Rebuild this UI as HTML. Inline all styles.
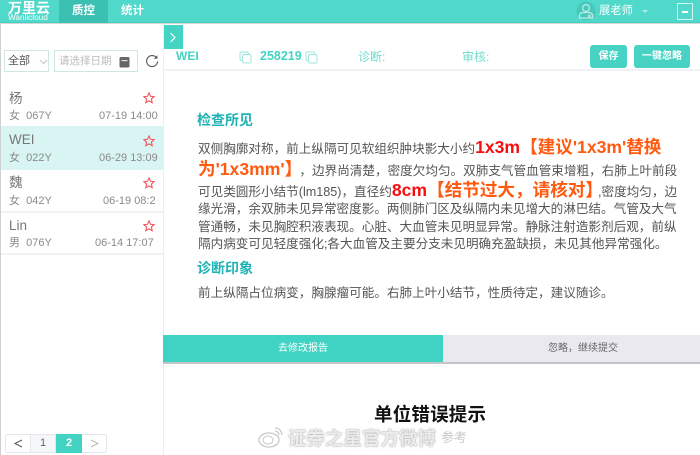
<!DOCTYPE html>
<html><head><meta charset="utf-8">
<style>
*{box-sizing:border-box;margin:0;padding:0}
html,body{width:700px;height:455px;overflow:hidden;background:#fff}
body{position:relative;font-family:"Liberation Sans","Noto Sans CJK SC",sans-serif;color:#555}
.a{position:absolute;white-space:nowrap}
.l{position:absolute;left:198px;white-space:nowrap;font-size:12.6px;line-height:18px;height:18px;color:#555}
.r{color:#f5100f;font-weight:700;font-size:17.6px}
.o{color:#ff5a10;font-weight:700;font-size:17.6px}
.h{position:absolute;left:197px;font-size:14px;font-weight:700;color:#1fb3b5;line-height:18px;white-space:nowrap}
.n{position:absolute;left:9px;font-size:13.5px;color:#777;line-height:18px}
.s{position:absolute;left:9px;font-size:11px;color:#8a8a8a;line-height:14px;white-space:pre}
.t{position:absolute;font-size:11px;color:#8a8a8a;line-height:14px;white-space:nowrap}
.star{position:absolute;left:143px}
.sep{position:absolute;left:1px;width:162px;height:2px;background:#f1f2f5}
</style></head><body>
<div class="a" style="left:0;top:0;width:700px;height:23px;background:#50d8ca;border-bottom:1px solid #45cfc0"></div>
<div class="a" style="left:0;top:23px;width:700px;height:1px;background:#d5d5d5"></div>
<div class="a" style="left:59px;top:0;width:49px;height:23px;background:#3cc0b2"></div>
<div class="a" style="left:8px;top:1px;font-size:14px;font-weight:700;color:#fff;line-height:14px">万里云</div>
<div class="a" style="left:8px;top:14px;font-size:8.2px;color:#fff;line-height:8px">Wanlicloud</div>
<div class="a" style="left:72px;top:3px;font-size:11.5px;font-weight:700;color:#fff;line-height:17px">质控</div>
<div class="a" style="left:121px;top:3px;font-size:11.5px;font-weight:700;color:#fff;line-height:17px">统计</div>
<svg class="a" style="left:576px;top:1px" width="20" height="20" viewBox="0 0 20 20"><circle cx="10" cy="10" r="9.5" fill="#47c9bc"/><circle cx="10" cy="7" r="3.4" fill="none" stroke="#bdeee8" stroke-width="1.2"/><path d="M3.5 17v-2.5q0-2.5 3-3h7q3 .5 3 3V17z" fill="none" stroke="#bdeee8" stroke-width="1.2"/><circle cx="13.5" cy="15" r="1" fill="none" stroke="#bdeee8"/></svg>
<div class="a" style="left:599px;top:3px;font-size:11.3px;color:#fff;line-height:17px">展老师</div>
<div class="a" style="left:642px;top:10px;width:0;height:0;border-left:3px solid transparent;border-right:3px solid transparent;border-top:3px solid #b5ebe5"></div>
<div class="a" style="left:677px;top:3px;width:16px;height:17px;border:1px solid #d5f5f1"></div>
<div class="a" style="left:682px;top:11px;width:6px;height:1.5px;background:#fff"></div>

<!-- left panel -->
<div class="a" style="left:0;top:24px;width:1px;height:431px;background:#cfcfcf"></div>
<div class="a" style="left:163px;top:24px;width:1px;height:431px;background:#eeeef1"></div>
<div class="a" style="left:4px;top:50px;width:45px;height:22px;border:1px solid #cfe7e2"></div>
<div class="a" style="left:8px;top:54px;font-size:11px;color:#555;line-height:15px">全部</div>
<svg class="a" style="left:39px;top:59px" width="9" height="6"><path d="M.8 1l3.7 3.5L8.2 1" fill="none" stroke="#c5c5c5"/></svg>
<div class="a" style="left:54px;top:50px;width:84px;height:22px;border:1px solid #cfe7e2"></div>
<div class="a" style="left:59px;top:54px;font-size:10.5px;color:#bbb;line-height:15px">请选择日期</div>
<svg class="a" style="left:119px;top:56px" width="11" height="12"><rect x=".5" y="1" width="10" height="10.5" rx="1.5" fill="#666"/><rect x="2.5" y="4" width="6" height="1.2" fill="#ddd"/></svg>
<svg class="a" style="left:145px;top:54px" width="14" height="14" viewBox="0 0 14 14"><path d="M11.8 4.2A5.5 5.5 0 1 0 12.6 7.5" fill="none" stroke="#555" stroke-width="1.1"/><path d="M12.4 1.2v3.6H8.9z" fill="#555"/></svg>

<div class="n" style="top:90px">杨</div>
<svg class="star" style="top:92px" width="12" height="12" viewBox="0 0 12 12"><path d="M6 1l1.5 3.3 3.6.4-2.7 2.4.8 3.6L6 8.9l-3.2 1.8.8-3.6L.9 4.7l3.6-.4z" fill="none" stroke="#f3545c" stroke-width="1.1"/></svg>
<div class="s" style="top:109px">女  067Y</div><div class="t" style="left:99px;top:109px">07-19 14:00</div>
<div class="a" style="left:1px;top:126px;width:162px;height:44px;background:#d9f5f3"></div>
<div class="n" style="top:131px">WEI</div>
<svg class="star" style="top:135px" width="12" height="12" viewBox="0 0 12 12"><path d="M6 1l1.5 3.3 3.6.4-2.7 2.4.8 3.6L6 8.9l-3.2 1.8.8-3.6L.9 4.7l3.6-.4z" fill="none" stroke="#f3545c" stroke-width="1.1"/></svg>
<div class="s" style="top:151px">女  022Y</div><div class="t" style="left:99px;top:151px">06-29 13:09</div>
<div class="n" style="top:174px">魏</div>
<svg class="star" style="top:177px" width="12" height="12" viewBox="0 0 12 12"><path d="M6 1l1.5 3.3 3.6.4-2.7 2.4.8 3.6L6 8.9l-3.2 1.8.8-3.6L.9 4.7l3.6-.4z" fill="none" stroke="#f3545c" stroke-width="1.1"/></svg>
<div class="s" style="top:194px">女  042Y</div><div class="t" style="left:103px;top:194px;width:52px;overflow:hidden">06-19 08:20</div>
<div class="sep" style="top:211px"></div>
<div class="n" style="top:217px">Lin</div>
<svg class="star" style="top:220px" width="12" height="12" viewBox="0 0 12 12"><path d="M6 1l1.5 3.3 3.6.4-2.7 2.4.8 3.6L6 8.9l-3.2 1.8.8-3.6L.9 4.7l3.6-.4z" fill="none" stroke="#f3545c" stroke-width="1.1"/></svg>
<div class="s" style="top:236px">男  076Y</div><div class="t" style="left:95px;top:236px">06-14 17:07</div>
<div class="sep" style="top:253px"></div>

<!-- pagination -->
<div class="a" style="left:5px;top:434px;width:102px;height:19px;border:1px solid #e4e6eb;border-radius:2px"></div>
<div class="a" style="left:30px;top:434px;width:26px;height:19px;background:#f6f7f9;border:1px solid #e4e6eb;color:#666;font-size:11px;line-height:17px;text-align:center">1</div>
<div class="a" style="left:56px;top:434px;width:26px;height:19px;background:#42d3c3;color:#fff;font-size:11px;font-weight:700;line-height:19px;text-align:center">2</div>
<svg class="a" style="left:13px;top:438px" width="11" height="11"><path d="M9 2L2 5.5 9 9" fill="none" stroke="#555" stroke-width="1"/></svg>
<svg class="a" style="left:89px;top:438px" width="11" height="11"><path d="M2 2l7 3.5L2 9" fill="none" stroke="#bbb" stroke-width="1"/></svg>

<!-- toolbar -->
<div class="a" style="left:164px;top:25px;width:19px;height:24px;background:#45d3c3"></div>
<svg class="a" style="left:169px;top:32px" width="8" height="11"><path d="M1.5 1l4.5 4.5L1.5 10" fill="none" stroke="#fff" stroke-width="1.1"/></svg>
<div class="a" style="left:176px;top:48px;font-size:12px;font-weight:700;color:#43d3c4;line-height:16px">WEI</div>
<svg class="a" style="left:239px;top:51px" width="13" height="13"><rect x="1" y="1" width="8.5" height="8.5" rx="1.5" fill="#fff" stroke="#9fe6de"/><rect x="3.5" y="3.5" width="8.5" height="8.5" rx="1.5" fill="#fff" stroke="#9fe6de"/></svg>
<div class="a" style="left:260px;top:48px;font-size:12.5px;font-weight:700;color:#43d3c4;line-height:16px">258219</div>
<svg class="a" style="left:305px;top:51px" width="13" height="13"><rect x="1" y="1" width="8.5" height="8.5" rx="1.5" fill="#fff" stroke="#9fe6de"/><rect x="3.5" y="3.5" width="8.5" height="8.5" rx="1.5" fill="#fff" stroke="#9fe6de"/></svg>
<div class="a" style="left:358px;top:49px;font-size:12px;color:#6fdccf;line-height:16px">诊断:</div>
<div class="a" style="left:462px;top:49px;font-size:12px;color:#6fdccf;line-height:16px">审核:</div>
<div class="a" style="left:590px;top:45px;width:37px;height:23px;background:#48d2c3;border-radius:3px;color:#fff;font-size:10px;font-weight:700;line-height:23px;text-align:center">保存</div>
<div class="a" style="left:634px;top:45px;width:56px;height:23px;background:#48d2c3;border-radius:3px;color:#fff;font-size:10px;font-weight:700;line-height:23px;text-align:center">一键忽略</div>
<div class="a" style="left:164px;top:69px;width:536px;height:2px;background:#f1f2f6"></div>

<!-- report -->
<div class="h" style="top:111px">检查所见</div>
<div class="l" style="top:138px">双侧胸廓对称，前上纵隔可见软组织肿块影大小约<span class="r">1x3m</span><span class="o">【建议'1x3m'替换</span></div>
<div class="l" style="top:160px"><span class="o">为'1x3mm'】</span><span style="margin-left:6px">，边界尚清楚，密度欠均匀。双肺支气管血管束增粗，右肺上叶前段</span></div>
<div class="l" style="top:181px">可见类圆形小结节(lm185)，直径约<span class="r">8cm</span><span class="o">【结节过大，请核对】</span><span style="margin-left:-5px">,密度均匀，边</span></div>
<div class="l" style="top:200px">缘光滑，余双肺未见异常密度影。两侧肺门区及纵隔内未见增大的淋巴结。气管及大气</div>
<div class="l" style="top:218px">管通畅，未见胸腔积液表现。心脏、大血管未见明显异常。静脉注射造影剂后观，前纵</div>
<div class="l" style="top:235px">隔内病变可见轻度强化;各大血管及主要分支未见明确充盈缺损，未见其他异常强化。</div>
<div class="h" style="top:259px">诊断印象</div>
<div class="l" style="top:284px">前上纵隔占位病变，胸腺瘤可能。右肺上叶小结节，性质待定，建议随诊。</div>

<!-- tabs -->
<div class="a" style="left:163px;top:335px;width:280px;height:28px;background:#40d3c3;color:#fff;font-size:10px;line-height:28px;text-align:center">去修改报告</div>
<div class="a" style="left:443px;top:335px;width:257px;height:28px;background:#ebe9f0;color:#666;font-size:10px;line-height:28px;padding-left:105px">忽略，继续提交</div>
<div class="a" style="left:163px;top:362px;width:537px;height:2px;background:#c5c5c5"></div>
<div class="a" style="left:374px;top:404px;font-size:18.5px;font-weight:700;color:#111;line-height:22px;letter-spacing:.2px">单位错误提示</div>

<!-- watermark -->
<svg class="a" style="left:258px;top:426px" width="26" height="22" viewBox="0 0 26 22"><ellipse cx="11" cy="14" rx="10" ry="7" fill="#fff" stroke="#c8c8c8" stroke-width="1.3"/><ellipse cx="10" cy="14" rx="5" ry="4" fill="none" stroke="#c8c8c8"/><path d="M17 2q6 0 7 7M17 5q3 0 4 4" fill="none" stroke="#c8c8c8" stroke-width="1.3"/></svg>
<div class="a" style="left:288px;top:428px;font-size:18.5px;font-weight:700;color:#ececec;line-height:21px;text-shadow:0 0 1px #aaa,0 0 2px #bbb">证券之星官方微博</div>
<div class="a" style="left:441px;top:430px;font-size:13px;color:#c8c8c8;line-height:15px">参考</div>
</body></html>
